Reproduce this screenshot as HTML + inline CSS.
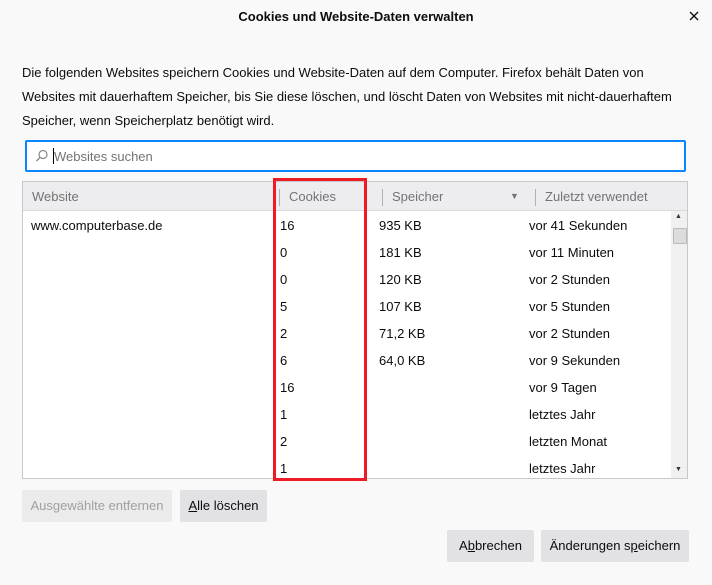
<!DOCTYPE html>
<html><head><meta charset="utf-8"><style>
*{margin:0;padding:0;box-sizing:border-box}
body{width:712px;height:585px;background:#f9f9fa;font-family:"Liberation Sans",sans-serif;font-size:13px;color:#0c0c0d;position:relative;overflow:hidden}
.a{position:absolute;white-space:nowrap}
.title{top:9px;left:0;width:712px;text-align:center;font-weight:bold;font-size:13px}
.desc{left:22px;font-size:13px}
.search{left:25px;top:140px;width:661px;height:32px;border:2px solid #0a84ff;background:#fff;border-radius:2px}
.table{left:22px;top:181px;width:666px;height:298px;border:1px solid #c8c8cc;background:#fff;overflow:hidden}
.head{left:0;top:0;width:664px;height:29px;background:#ededf0;border-bottom:1px solid #dadade;color:#737373}
.sep{position:absolute;top:7px;width:1px;height:17px;background:#b1b1b3}
.btn{position:absolute;height:32px;background:#e2e2e5;border-radius:2px;text-align:center;line-height:32px}
.red{left:273px;top:178px;width:94px;height:303px;border:3px solid #ed1c24}
</style></head><body>
<div class="a title">Cookies und Website-Daten verwalten</div>
<svg class="a" style="left:689px;top:11px" width="10" height="10" viewBox="0 0 10 10"><path d="M1 1L9 9M9 1L1 9" stroke="#111" stroke-width="1.4"/></svg>
<div class="a desc" style="top:65px">Die folgenden Websites speichern Cookies und Website-Daten auf dem Computer. Firefox behält Daten von</div>
<div class="a desc" style="top:89px">Websites mit dauerhaftem Speicher, bis Sie diese löschen, und löscht Daten von Websites mit nicht-dauerhaftem</div>
<div class="a desc" style="top:113px">Speicher, wenn Speicherplatz benötigt wird.</div>
<div class="a search">
<svg class="a" style="left:8px;top:7px" width="14" height="14" viewBox="0 0 14 14"><circle cx="8" cy="5.5" r="4" fill="none" stroke="#888" stroke-width="1.2"/><line x1="5" y1="8.5" x2="1.5" y2="12" stroke="#888" stroke-width="1.3"/></svg>
<div class="a" style="left:26px;top:6px;width:1px;height:16px;background:#000"></div>
<div class="a" style="left:27px;top:7px;color:#737373">Websites suchen</div>
</div>
<div class="a table">
<div class="a head">
<div class="a" style="left:9px;top:7px">Website</div>
<div class="sep" style="left:256px"></div><div class="a" style="left:266px;top:7px">Cookies</div>
<div class="sep" style="left:359px"></div><div class="a" style="left:369px;top:7px">Speicher</div>
<div class="a" style="left:487px;top:9px;font-size:9px">▼</div>
<div class="sep" style="left:512px"></div><div class="a" style="left:522px;top:7px">Zuletzt verwendet</div>
</div>
<div class="a" style="left:8px;top:36px">www.computerbase.de</div>
<div class="a" style="left:257px;top:30px;line-height:27px">16<br>0<br>0<br>5<br>2<br>6<br>16<br>1<br>2<br>1</div>
<div class="a" style="left:356px;top:30px;line-height:27px">935 KB<br>181 KB<br>120 KB<br>107 KB<br>71,2 KB<br>64,0 KB</div>
<div class="a" style="left:506px;top:30px;line-height:27px">vor 41 Sekunden<br>vor 11 Minuten<br>vor 2 Stunden<br>vor 5 Stunden<br>vor 2 Stunden<br>vor 9 Sekunden<br>vor 9 Tagen<br>letztes Jahr<br>letzten Monat<br>letztes Jahr</div>
<div class="a" style="left:648px;top:29px;width:16px;height:267px;background:#f0f0f0"></div>
<div class="a" style="left:652px;top:31px;font-size:7px;color:#333">▲</div>
<div class="a" style="left:650px;top:46px;width:14px;height:16px;background:#dcdcdc;border:1px solid #bbb"></div>
<div class="a" style="left:652px;top:284px;font-size:7px;color:#333">▼</div>
</div>
<div class="a red"></div>
<div class="btn" style="left:22px;top:490px;width:150px;background:#ebebeb;color:#a0a0a0">Ausgewählte entfernen</div>
<div class="btn" style="left:180px;top:490px;width:87px"><u>A</u>lle löschen</div>
<div class="btn" style="left:447px;top:530px;width:87px">A<u>b</u>brechen</div>
<div class="btn" style="left:541px;top:530px;width:148px">Änderungen s<u>p</u>eichern</div>
</body></html>
